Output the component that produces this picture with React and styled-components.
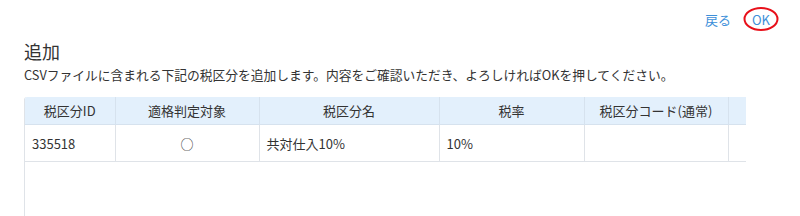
import React from "react";
import styled, { createGlobalStyle } from "styled-components";

const GlobalStyle = createGlobalStyle`
  body {
    margin: 0;
    background: #fff;
    font-family: "Noto Sans CJK JP", "Noto Sans", sans-serif;
    color: #333;
  }
`;

const columns = [
  { key: "id", label: "税区分ID", width: 90 },
  { key: "target", label: "適格判定対象", width: 144, center: true },
  { key: "name", label: "税区分名", width: 180 },
  { key: "rate", label: "税率", width: 145 },
  { key: "code", label: "税区分コード(通常)", width: 144 },
  { key: "extra", label: "", width: 144 }
];

const rows = [{ id: "335518", target: "○", name: "共対仕入10%", rate: "10%", code: "", extra: "" }];

function App() {
  return (
    <Page>
      <GlobalStyle />
      <TopBar>
        <LinkButton>戻る</LinkButton>
        <OkWrap>
          <LinkButton>OK</LinkButton>
          <Mark />
        </OkWrap>
      </TopBar>
      <Title>追加</Title>
      <Description>
        CSVファイルに含まれる下記の税区分を追加します。内容をご確認いただき、よろしければOKを押してください。
      </Description>
      <TableScroll>
        <Table>
          <colgroup>
            {columns.map(col => (
              <col key={col.key} style={{ width: col.width }} />
            ))}
          </colgroup>
          <thead>
            <tr>
              {columns.map(col => (
                <Th key={col.key}>{col.label}</Th>
              ))}
            </tr>
          </thead>
          <tbody>
            {rows.map((row, idx) => (
              <tr key={idx}>
                {columns.map(col => (
                  <Td key={col.key} $center={col.center}>
                    {row[col.key]}
                  </Td>
                ))}
              </tr>
            ))}
          </tbody>
        </Table>
      </TableScroll>
    </Page>
  );
}

const Page = styled.div`
  padding: 0 54px 0 24px;
  height: 216px;
  box-sizing: border-box;
  overflow: hidden;
  display: flex;
  flex-direction: column;
`;

const TopBar = styled.div`
  display: flex;
  justify-content: flex-end;
  align-items: center;
  gap: 21px;
  height: 38px;
  margin-right: -24px;
`;

const LinkButton = styled.span`
  font-size: 13px;
  color: #3d8fd9;
  cursor: pointer;
`;

const OkWrap = styled.span`
  position: relative;
  display: inline-flex;
  align-items: center;
`;

const Mark = styled.span`
  position: absolute;
  left: 50%;
  top: 50%;
  width: 31px;
  height: 20px;
  transform: translate(-50%, -50%);
  border: 2px solid #e8101a;
  border-radius: 50%;
`;

const Title = styled.h2`
  margin: 1px 0 0;
  font-size: 18px;
  font-weight: normal;
  color: #333;
  line-height: 24px;
`;

const Description = styled.p`
  margin: 2px 0 0;
  font-size: 12.75px;
  line-height: 20px;
  color: #333;
`;

const TableScroll = styled.div`
  margin-top: 12px;
  flex: 1;
  overflow: hidden;
  border-left: 1px solid #dfe3e8;
  border-top-left-radius: 3px;
`;

const Table = styled.table`
  border-collapse: collapse;
  table-layout: fixed;
  width: 847px;
  font-size: 13px;
`;

const Th = styled.th`
  height: 27px;
  padding: 0 8px;
  background: #e3f0fc;
  border-right: 1px solid #d6e2ee;
  border-bottom: 1px solid #d6e2ee;
  font-weight: normal;
  color: #333;
  text-align: center;
`;

const Td = styled.td`
  height: 36px;
  padding: 0 7px;
  border-right: 1px solid #dfe3e8;
  border-bottom: 1px solid #dfe3e8;
  color: #333;
  text-align: ${p => (p.$center ? "center" : "left")};
`;

export default App;
